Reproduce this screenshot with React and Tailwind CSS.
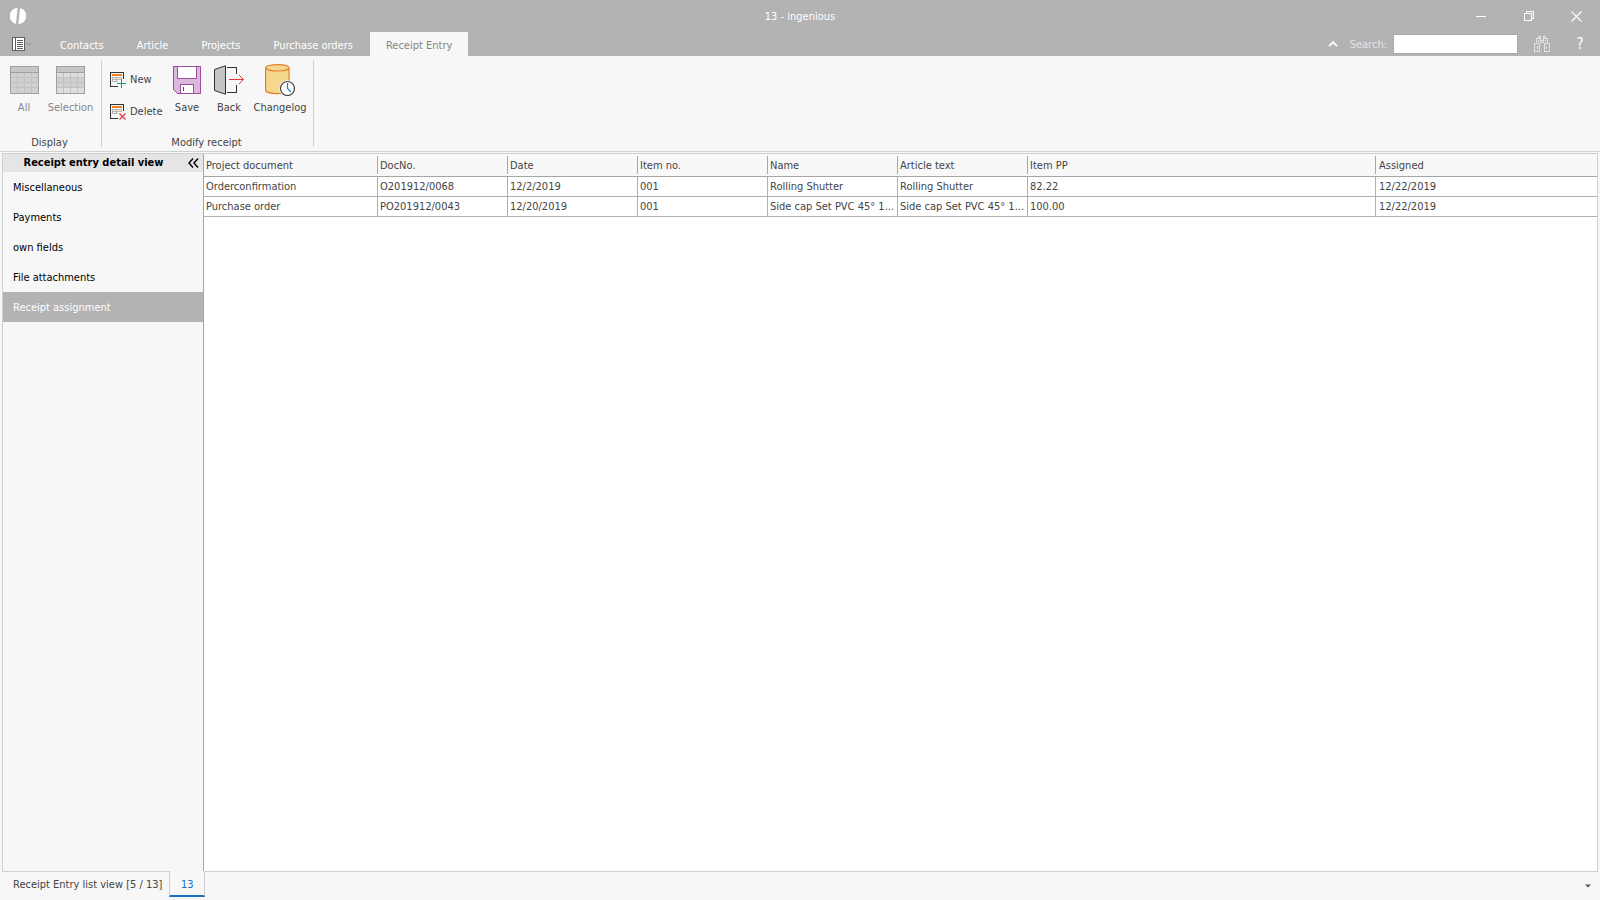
import React from "react";
import clsx from "clsx";

const tabs = ["Contacts", "Article", "Projects", "Purchase orders", "Receipt Entry"];

const sections = ["Miscellaneous", "Payments", "own fields", "File attachments", "Receipt assignment"];

const columns = [
  { title: "Project document", width: "w-[174px]" },
  { title: "DocNo.", width: "w-[130px]" },
  { title: "Date", width: "w-[130px]" },
  { title: "Item no.", width: "w-[130px]" },
  { title: "Name", width: "w-[130px]" },
  { title: "Article text", width: "w-[130px]" },
  { title: "Item PP", width: "w-[348px]" },
  { title: "Assigned", width: "" },
];

const rows = [
  ["Orderconfirmation", "O201912/0068", "12/2/2019", "001", "Rolling Shutter", "Rolling Shutter", "82.22", "12/22/2019"],
  ["Purchase order", "PO201912/0043", "12/20/2019", "001", "Side cap Set PVC 45° 1...", "Side cap Set PVC 45° 1...", "100.00", "12/22/2019"],
];

const LogoIcon = () => (
  <svg width="16" height="16" viewBox="0 0 16 16" fill="#fff">
    <path d="M7.6 0 A8 8 0 0 0 6 15.8 Z" />
    <path d="M10 0.2 A8 8 0 0 1 8.4 16 Z" />
  </svg>
);

const MenuIcon = () => (
  <svg width="20" height="15" viewBox="0 0 20 15" shapeRendering="crispEdges">
    <rect x="0.5" y="0.5" width="12" height="13" fill="#fff" stroke="#606060" />
    <path d="M3.5 0V14" stroke="#606060" />
    <path d="M5 3.5H11M5 5.5H11M5 7.5H11M5 9.5H11M5 11.5H11" stroke="#606060" />
    <path d="M14.5 6 L17 8.5 L19.5 6" fill="none" stroke="#8c8c8c" shapeRendering="auto" />
  </svg>
);

const GridIcon = ({ highlight }) => (
  <svg width="29" height="28" viewBox="0 0 29 28" shapeRendering="crispEdges">
    <rect x="0.5" y="0.5" width="28" height="27" fill="#d0d0d0" stroke="#a0a0a0" />
    <rect x="1" y="1" width="27" height="5" fill="#c6c6c6" />
    {highlight && <path d="M1 7H28V11H1ZM1 22H28V27H1Z" fill="#dedede" />}
    <path d="M1 11.5H28M1 16.5H28M1 21.5H28M7.5 7V27M14.5 7V27M21.5 7V27" stroke="#c2c2c2" />
    <path d="M0 6.5H29" stroke="#a0a0a0" />
  </svg>
);

const RecordIcon = ({ kind }) => (
  <svg width="17" height="17" viewBox="0 0 17 17">
    <g shapeRendering="crispEdges">
      <path d="M8 14.5H0.5V0.5H13.5V7" fill="none" stroke="#333" />
      <rect x="2" y="2" width="10" height="2" fill="#f08020" />
      <path d="M2 5.5H12M2 7.5H12M2 9.5H8M2.5 5V10M6.5 5V10M11.5 5V8" stroke="#b5b5b5" />
    </g>
    {kind === "add" ? (
      <path d="M11.5 7V16M7 11.5H16" stroke="#18a558" shapeRendering="crispEdges" />
    ) : (
      <path d="M9.5 9.5L15.5 15.5M15.5 9.5L9.5 15.5" stroke="#e8373d" strokeWidth="1.2" />
    )}
  </svg>
);

const SaveIcon = () => (
  <svg width="28" height="28" viewBox="0 0 28 28" shapeRendering="crispEdges">
    <path d="M0.5 0.5H27.5V27.5H4.5L0.5 23.5Z" fill="#dcb8dc" stroke="#9b4f9e" />
    <rect x="4.5" y="0.5" width="19" height="12" fill="#fff" stroke="#9b4f9e" />
    <rect x="7.5" y="18.5" width="13" height="9" fill="#fff" stroke="#9b4f9e" />
    <path d="M10.5 21V25" stroke="#555" />
  </svg>
);

const BackIcon = () => (
  <svg width="30" height="30" viewBox="0 0 30 30">
    <path d="M0.5 4.5L11.5 0.7V29.3L0.5 25.5Z" fill="#c4c4c4" stroke="#333" />
    <path d="M13 2.5H22.5V9M22.5 20V27.5H13" fill="none" stroke="#333" shapeRendering="crispEdges" />
    <path d="M15 14.5H29.5M25 10L29.5 14.5L25 19" fill="none" stroke="#e8373d" />
  </svg>
);

const ChangelogIcon = () => (
  <svg width="30" height="32" viewBox="0 0 30 32">
    <path d="M0.6 3.8V26.2C0.6 28.2 6 29.6 12.5 29.6S24 28.2 24 26.2V3.8" fill="#f6d78e" stroke="#e67e2b" strokeWidth="1.2" />
    <ellipse cx="12.3" cy="3.8" rx="11.7" ry="3.2" fill="#f6d78e" stroke="#e67e2b" strokeWidth="1.2" />
    <circle cx="22.5" cy="24.5" r="8.3" fill="#f7f7f7" />
    <circle cx="22.5" cy="24.5" r="7" fill="#fff" stroke="#444" strokeWidth="1.2" />
    <path d="M22.5 19V24.5L26 28" fill="none" stroke="#1e86c8" strokeWidth="1.2" />
  </svg>
);

const BinocularsIcon = () => (
  <svg width="16" height="16" viewBox="0 0 16 16" fill="none" stroke="#e2e2e2" shapeRendering="crispEdges">
    <path d="M0.5 7.5H5.5V15.5H0.5ZM10.5 7.5H15.5V15.5H10.5Z" />
    <path d="M2.5 7V2.5H6.5V7M9.5 7V2.5H13.5V7M4.5 2V0.5H6.5V2M9.5 2V0.5H11.5V2M6 4.5H10M6 6.5H10" />
    <path d="M3.5 10V13M12.5 10V13M4.5 4V6M11.5 4V6" />
  </svg>
);

const LargeButton = ({ icon, label, disabled, className }) => (
  <button type="button" disabled={disabled} className={clsx("flex flex-col items-center disabled:text-[#85858c]", className)}>
    <span className="flex h-8 items-center justify-center">{icon}</span>
    <span className="mt-[5px] leading-[14px]">{label}</span>
  </button>
);

const SmallButton = ({ icon, label }) => (
  <button type="button" className="flex h-8 items-center gap-[3px]">
    {icon}
    <span className="leading-[14px]">{label}</span>
  </button>
);

const RibbonGroup = ({ title, children, className }) => (
  <section className={clsx("flex flex-col justify-between border-r border-[#d0d0d0]", className)}>
    <div className="flex pt-1">{children}</div>
    <h2 className="pr-[2px] text-center leading-[8px]">{title}</h2>
  </section>
);

const TitleBar = () => (
  <div className="grid h-8 grid-cols-[1fr_auto_1fr] items-center text-white">
    <div className="pl-[10px]">
      <LogoIcon />
    </div>
    <h1 className="pt-[2px]">13 - ingenious</h1>
    <div className="flex justify-end">
      <button type="button" aria-label="Minimize" className="flex h-8 w-12 items-center justify-center">
        <svg width="10" height="10" stroke="#fff" shapeRendering="crispEdges">
          <path d="M0 5.5H10" />
        </svg>
      </button>
      <button type="button" aria-label="Restore" className="flex h-8 w-12 items-center justify-center">
        <svg width="10" height="10" fill="none" stroke="#fff" shapeRendering="crispEdges">
          <path d="M0.5 2.5H7.5V9.5H0.5ZM2.5 2V0.5H9.5V7.5H8" />
        </svg>
      </button>
      <button type="button" aria-label="Close" className="flex h-8 w-[47px] items-center justify-center">
        <svg width="11" height="11" stroke="#fff" strokeWidth="1.1">
          <path d="M0.5 0.5L10.5 10.5M10.5 0.5L0.5 10.5" />
        </svg>
      </button>
    </div>
  </div>
);

const TabBar = () => (
  <div className="flex h-6 items-center text-white">
    <button type="button" aria-label="Application menu" className="w-11 pl-3">
      <MenuIcon />
    </button>
    <nav className="flex h-full gap-px">
      {tabs.map((tab) => (
        <button
          key={tab}
          type="button"
          className={clsx("h-full px-4 pt-1", tab === "Receipt Entry" && "bg-[#f7f7f7] text-[#858585]")}
        >
          {tab}
        </button>
      ))}
    </nav>
    <div className="ml-auto flex items-center">
      <button type="button" aria-label="Collapse ribbon" className="mr-3">
        <svg width="10" height="6" fill="none" stroke="#fff" strokeWidth="1.8">
          <path d="M1 5.2L5 1.2L9 5.2" />
        </svg>
      </button>
      <label htmlFor="search" className="mr-[6px] pt-px text-[#e4e4e4]">
        Search:
      </label>
      <input id="search" type="text" className="h-5 w-[125px] border border-[#a8a8a8] bg-white px-1 text-[#444] outline-none" />
      <button type="button" aria-label="Find" className="ml-4">
        <BinocularsIcon />
      </button>
      <button type="button" className="w-[50px] pl-[10px] text-center text-[15px]">
        ?
      </button>
    </div>
  </div>
);

const Ribbon = () => (
  <div className="flex h-24 border-b border-[#d0d0d0] py-1">
    <RibbonGroup title="Display" className="w-[102px]">
      <div className="flex pl-1">
        <LargeButton icon={<GridIcon />} label="All" className="w-10" disabled />
        <LargeButton icon={<GridIcon highlight />} label="Selection" className="w-[53px]" disabled />
      </div>
    </RibbonGroup>
    <RibbonGroup title="Modify receipt" className="w-[212px]">
      <div className="flex w-16 flex-col pl-2">
        <SmallButton icon={<RecordIcon kind="add" />} label="New" />
        <SmallButton icon={<RecordIcon kind="delete" />} label="Delete" />
      </div>
      <LargeButton icon={<SaveIcon />} label="Save" className="w-[42px]" />
      <LargeButton icon={<BackIcon />} label="Back" className="w-[42px]" />
      <LargeButton icon={<ChangelogIcon />} label="Changelog" className="w-[60px]" />
    </RibbonGroup>
  </div>
);

const Sidebar = () => (
  <aside className="flex w-[201px] shrink-0 flex-col border-r border-[#a6a6a6] text-black">
    <div className="flex h-[18px] items-center bg-[#e5e5e5] pr-1">
      <h2 className="flex-1 pr-1 text-center font-bold">Receipt entry detail view</h2>
      <button type="button" aria-label="Collapse navigation">
        <svg width="11" height="10" fill="none" stroke="#000" strokeWidth="1.4">
          <path d="M5 0.5L1 5L5 9.5M10 0.5L6 5L10 9.5" />
        </svg>
      </button>
    </div>
    <nav className="flex flex-col">
      {sections.map((section) => (
        <button
          key={section}
          type="button"
          className={clsx("h-[30px] pt-[2px] pl-[10px] text-left", section === "Receipt assignment" && "bg-[#b3b3b3] text-white")}
        >
          {section}
        </button>
      ))}
    </nav>
  </aside>
);

const DocumentTable = () => (
  <table className="w-full table-fixed border-separate border-spacing-0">
    <thead>
      <tr className="h-[23px] bg-[#f8f8f8]">
        {columns.map((column) => (
          <th key={column.title} className={clsx("group border-b border-[#a6a6a6] p-0 text-left font-normal", column.width)}>
            <div className="flex h-[18px] items-center border-r border-[#a6a6a6] pt-px pl-[2px] group-last:border-r-0 group-last:pl-[3px]">{column.title}</div>
          </th>
        ))}
      </tr>
    </thead>
    <tbody>
      {rows.map((row) => (
        <tr key={row[1]} className="h-5">
          {row.map((value, i) => (
            <td key={columns[i].title} className="truncate border-r border-b border-[#b0b0b0] py-0 pr-0 pl-[2px] last:border-r-0 last:pl-[3px]">
              {value}
            </td>
          ))}
        </tr>
      ))}
    </tbody>
  </table>
);

const Footer = () => (
  <footer className="flex h-7 items-start pl-[2px]">
    <button type="button" className="h-6 pt-px pr-[7px] pl-[11px]">
      Receipt Entry list view [5 / 13]
    </button>
    <button type="button" className="relative -mt-px h-[26px] w-9 border-x border-b-2 border-x-[#d0d0d0] border-b-[#1570bf] bg-[#f7f7f7] pt-1 text-[#1570bf]">
      13
    </button>
    <button type="button" aria-label="Open windows" className="mt-3 mr-[9px] ml-auto">
      <svg width="6" height="4" fill="#555">
        <path d="M0 0.5H6L3 3.5Z" />
      </svg>
    </button>
  </footer>
);

const App = () => {
  return (
    <div className="flex h-screen flex-col bg-[#f7f7f7] font-['DejaVu_Sans_Condensed','DejaVu_Sans',sans-serif] text-[11px] leading-[14px] text-[#444]">
      <header>
        <div className="bg-[#b3b3b3]">
          <TitleBar />
          <TabBar />
        </div>
        <Ribbon />
      </header>
      <main className="mx-[2px] mt-px flex min-h-0 flex-1 border border-[#d0d0d0]">
        <Sidebar />
        <div className="min-w-0 flex-1 overflow-auto bg-white">
          <DocumentTable />
        </div>
      </main>
      <Footer />
    </div>
  );
};

export default App;
